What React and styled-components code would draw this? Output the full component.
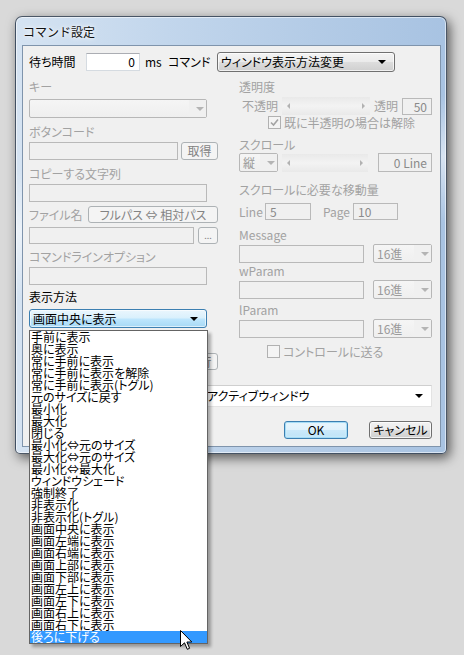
import React from "react";
import styled, { createGlobalStyle, css } from "styled-components";

const GlobalStyle = createGlobalStyle`
  html, body {
    margin: 0;
    padding: 0;
    background: #d9d9d9;
  }
  body {
    font-family: "Noto Sans CJK JP", "Noto Sans", sans-serif;
    font-size: 12px;
    font-feature-settings: "palt";
    color: #000;
  }
`;

const Desktop = styled.div`
  position: relative;
  width: 464px;
  height: 655px;
  overflow: hidden;
  padding: 16px 0 0 15px;
  box-sizing: border-box;
`;

// Aero style window frame
const Window = styled.div`
  width: 432px;
  box-sizing: border-box;
  border: 1px solid rgba(30, 40, 55, 0.75);
  border-radius: 7px 7px 5px 5px;
  padding: 0 5px 6px 6px;
  background:
    linear-gradient(170deg, rgba(255, 255, 255, 0) 30%, rgba(255, 255, 255, 0.55) 42%, rgba(255, 255, 255, 0) 55%),
    linear-gradient(to right, #d5e3f2, #c2d6ec 35%, #b3cbe6 70%, #a8c3e2);
  box-shadow: 3px 4px 12px rgba(0, 0, 0, 0.6), inset 0 0 0 1px rgba(255, 255, 255, 0.55);
`;

const TitleBar = styled.div`
  height: 28px;
  display: flex;
  align-items: center;
  padding-left: 1px;
`;

const Title = styled.span`
  font-size: 12px;
  line-height: 14px;
  color: #111;
  text-shadow: 0 0 6px #fff, 0 0 3px #fff;
  margin-top: 1px;
  font-feature-settings: normal;
`;

const Panel = styled.div`
  border: 1px solid #7f94ac;
  background: #f0f0f0;
  padding: 6px 8px 7px 6px;
`;

const Row = styled.div`
  display: flex;
  align-items: center;
  height: ${(p) => p.$h || 18}px;
  margin-top: ${(p) => p.$mt || 0}px;
  padding-left: ${(p) => p.$pl || 0}px;
  justify-content: ${(p) => (p.$end ? "flex-end" : "flex-start")};
`;

const Columns = styled.div`
  display: grid;
  grid-template-columns: 189px 193px;
  column-gap: 21px;
  margin-top: 8px;
  align-items: start;
`;

const Column = styled.div`
  display: flex;
  flex-direction: column;
`;

const Label = styled.div`
  line-height: 14px;
  height: 14px;
  white-space: nowrap;
  flex: none;
  color: ${(p) => (p.$off ? "#a2a2a2" : "#000")};
  width: ${(p) => (p.$w ? `${p.$w}px` : "auto")};
  margin-top: ${(p) => p.$mt || 0}px;
  margin-left: ${(p) => p.$ml || 0}px;
  padding-left: ${(p) => p.$pl || 0}px;
  box-sizing: border-box;
`;

const TextBox = styled.div`
  flex: none;
  box-sizing: border-box;
  width: ${(p) => p.$w}px;
  height: ${(p) => p.$h || 18}px;
  margin-top: ${(p) => p.$mt || 0}px;
  margin-left: ${(p) => p.$ml || 0}px;
  line-height: ${(p) => (p.$h || 18) - 2}px;
  padding: 0 4px;
  text-align: ${(p) => (p.$right ? "right" : "left")};
  white-space: nowrap;
  ${(p) =>
    p.$off
      ? css`
          background: #f0f0f0;
          border: 1px solid #b9b9b9;
          color: #8a8a8a;
        `
      : css`
          background: #fff;
          border: 1px solid #d5dbe1;
          border-top-color: #abadb3;
          color: #000;
        `}
`;

const comboLook = {
  off: css`
    background: linear-gradient(#f5f5f5, #efefef);
    border: 1px solid #b7b7b7;
    border-radius: 2px;
    color: #9a9a9a;
  `,
  button: css`
    background: linear-gradient(#f3f3f3 0%, #ebebeb 48%, #dddddd 52%, #cfcfcf 100%);
    border: 1px solid #707070;
    border-radius: 3px;
    box-shadow: inset 0 0 0 1px rgba(255, 255, 255, 0.7);
    color: #000;
  `,
  hot: css`
    background: linear-gradient(#eaf6fd 0%, #d9f0fc 48%, #bee6fd 52%, #a7d9f5 100%);
    border: 1px solid #3c7fb1;
    border-radius: 3px;
    box-shadow: inset 0 0 0 1px rgba(255, 255, 255, 0.6);
    color: #000;
  `,
  white: css`
    background: #fff;
    border: 1px solid #e3e3e3;
    border-top-color: #cfcfcf;
    color: #000;
  `,
};

const Combo = styled.div`
  flex: none;
  box-sizing: border-box;
  display: flex;
  align-items: center;
  width: ${(p) => (p.$w ? `${p.$w}px` : "auto")};
  height: ${(p) => p.$h || 19}px;
  margin-top: ${(p) => p.$mt || 0}px;
  margin-left: ${(p) => p.$ml || 0}px;
  padding-left: ${(p) => p.$pad ?? 3}px;
  white-space: nowrap;
  ${(p) => comboLook[p.$look || "off"]}
`;

const ComboAnchor = styled.div`
  position: relative;
  margin-top: 5px;
`;

const ComboText = styled.span`
  flex: 1;
  line-height: 14px;
`;

const Arrow = styled.span`
  flex: none;
  width: 0;
  height: 0;
  margin: 0 ${(p) => p.$mr ?? 8}px 0 4px;
  border-left: 4px solid transparent;
  border-right: 4px solid transparent;
  border-top: 4px solid ${(p) => (p.$off ? "#b4b4b4" : "#000")};
`;

const ArrowZone = styled.span`
  flex: none;
  align-self: stretch;
  width: 17px;
  display: flex;
  align-items: center;
  justify-content: center;
  background: #f0f0f0;
`;

const buttonLook = {
  off: css`
    background: #f4f4f4;
    border: 1px solid #adb2b5;
    color: #838383;
  `,
  normal: css`
    background: linear-gradient(#f2f2f2 0%, #ebebeb 48%, #dddddd 52%, #cfcfcf 100%);
    border: 1px solid #707070;
    color: #000;
    box-shadow: inset 0 0 0 1px rgba(255, 255, 255, 0.75);
  `,
  focus: css`
    background: linear-gradient(#eaf6fd 0%, #e0f2fc 48%, #cbe9fa 52%, #bde3f8 100%);
    border: 1px solid #3c7fb1;
    color: #000;
    box-shadow: inset 0 0 0 1px #a6dcf6, inset 0 0 2px 1px #d9f1fc;
  `,
};

const PushButton = styled.div`
  flex: none;
  box-sizing: border-box;
  width: ${(p) => p.$w}px;
  height: ${(p) => p.$h || 18}px;
  margin-left: ${(p) => p.$ml || 0}px;
  margin-top: ${(p) => p.$mt || 0}px;
  border-radius: 3px;
  display: flex;
  align-items: center;
  justify-content: center;
  white-space: nowrap;
  line-height: 14px;
  font-size: ${(p) => p.$size || 12}px;
  ${(p) => buttonLook[p.$look || "off"]}
`;

const Slider = styled.div`
  flex: none;
  box-sizing: border-box;
  width: ${(p) => p.$w}px;
  height: 18px;
  margin-left: ${(p) => p.$ml || 0}px;
  background: linear-gradient(#e9e9e9, #f3f3f3 50%, #e9e9e9);
  display: flex;
  align-items: center;
  justify-content: space-between;
  padding: 0 5px;
`;

const SliderArrow = styled.span`
  width: 0;
  height: 0;
  border-top: 3px solid transparent;
  border-bottom: 3px solid transparent;
  ${(p) =>
    p.$right
      ? css`border-left: 3px solid #b2b2b2;`
      : css`border-right: 3px solid #b2b2b2;`}
`;

const CheckBox = styled.span`
  flex: none;
  box-sizing: border-box;
  width: 13px;
  height: 13px;
  border: 1px solid #b1b1b1;
  background: #f4f4f4;
  margin-right: 3px;
  display: flex;
  align-items: center;
  justify-content: center;
`;

const DropList = styled.div`
  position: absolute;
  left: 0;
  top: calc(100% + 2px);
  width: 179px;
  box-sizing: border-box;
  background: #fff;
  border: 1px solid #646464;
  box-shadow: 3px 3px 3px rgba(0, 0, 0, 0.3);
  z-index: 5;
`;

const DropItem = styled.div`
  height: 12px;
  line-height: 12px;
  padding-left: 1px;
  white-space: nowrap;
  background: ${(p) => (p.$selected ? "#3399ff" : "transparent")};
  color: ${(p) => (p.$selected ? "#fff" : "#000")};
`;

const Cursor = styled.svg`
  position: absolute;
  left: 180px;
  top: 630px;
  z-index: 10;
`;

const items = [
  "手前に表示",
  "奥に表示",
  "常に手前に表示",
  "常に手前に表示を解除",
  "常に手前に表示(トグル)",
  "元のサイズに戻す",
  "最小化",
  "最大化",
  "閉じる",
  "最小化⇔元のサイズ",
  "最大化⇔元のサイズ",
  "最小化⇔最大化",
  "ウィンドウシェード",
  "強制終了",
  "非表示化",
  "非表示化(トグル)",
  "画面中央に表示",
  "画面左端に表示",
  "画面右端に表示",
  "画面上部に表示",
  "画面下部に表示",
  "画面左上に表示",
  "画面左下に表示",
  "画面右上に表示",
  "画面右下に表示",
  "後ろに下げる",
];

const Check = () => (
  <svg width="9" height="9" viewBox="0 0 9 9">
    <path d="M1 4.5 L3.5 7 L8 1.5" fill="none" stroke="#a3a3a3" strokeWidth="1.6" />
  </svg>
);

const OffCombo = ({ w, text, ml }) => (
  <Combo $w={w} $ml={ml} $pad={text ? 3 : 0}>
    <ComboText>{text}</ComboText>
    <ArrowZone>
      <Arrow $off $mr={0} />
    </ArrowZone>
  </Combo>
);

const App = () => {
  return (
    <Desktop>
      <GlobalStyle />
      <Window>
        <TitleBar>
          <Title>コマンド設定</Title>
        </TitleBar>
        <Panel>
          <Row $h={20}>
            <Label $w={57}>待ち時間</Label>
            <TextBox $w={54} $right>0</TextBox>
            <Label $w={28} $pl={5}>ms</Label>
            <Label $w={49}>コマンド</Label>
            <Combo $w={178} $h={20} $look="button">
              <ComboText>ウィンドウ表示方法変更</ComboText>
              <Arrow />
            </Combo>
          </Row>

          <Columns>
            <Column>
              <Label $off>キー</Label>
              <Combo $w={178} $mt={5} $pad={0}>
                <ComboText />
                <ArrowZone>
                  <Arrow $off $mr={0} />
                </ArrowZone>
              </Combo>
              <Label $off $mt={7}>ボタンコード</Label>
              <Row $mt={3}>
                <TextBox $off $w={149} />
                <PushButton $w={37} $ml={3}>取得</PushButton>
              </Row>
              <Label $off $mt={7}>コピーする文字列</Label>
              <TextBox $off $w={178} $mt={3} />
              <Row $mt={4} $h={17}>
                <Label $off $w={59}>ファイル名</Label>
                <PushButton $w={130} $h={17}>フルパス ⇔ 相対パス</PushButton>
              </Row>
              <Row $mt={4} $h={17}>
                <TextBox $off $w={165} $h={17} />
                <PushButton $w={20} $h={17} $ml={4} $size={9}>...</PushButton>
              </Row>
              <Label $off $mt={6}>コマンドラインオプション</Label>
              <TextBox $off $w={178} $mt={3} />
              <Label $mt={5}>表示方法</Label>
              <ComboAnchor>
                <Combo $w={178} $look="hot">
                  <ComboText>画面中央に表示</ComboText>
                  <Arrow />
                </Combo>
                <DropList>
                  {items.map((it, i) => (
                    <DropItem key={it} $selected={i === items.length - 1}>
                      {it}
                    </DropItem>
                  ))}
                </DropList>
              </ComboAnchor>
              <Row $mt={25} $h={17} $end>
                <PushButton $w={37} $h={17}>実行</PushButton>
              </Row>
            </Column>

            <Column>
              <Label $off>透明度</Label>
              <Row $mt={3}>
                <Label $off $w={43} $pl={3}>不透明</Label>
                <Slider $w={88}>
                  <SliderArrow />
                  <SliderArrow $right />
                </Slider>
                <Label $off $w={28} $ml={4}>透明</Label>
                <TextBox $off $w={30} $h={17} $right>50</TextBox>
              </Row>
              <Row $mt={1} $h={13} $pl={29}>
                <CheckBox>
                  <Check />
                </CheckBox>
                <Label $off>既に半透明の場合は解除</Label>
              </Row>
              <Label $off $mt={9}>スクロール</Label>
              <Row $mt={1} $h={19}>
                <OffCombo w={39} text="縦" />
                <Slider $w={86} $ml={4}>
                  <SliderArrow />
                  <SliderArrow $right />
                </Slider>
                <TextBox $off $w={54} $h={19} $ml={10} $right>0 Line</TextBox>
              </Row>
              <Label $off $mt={11}>スクロールに必要な移動量</Label>
              <Row $mt={6} $h={17}>
                <Label $off $w={26}>Line</Label>
                <TextBox $off $w={46} $h={17}>5</TextBox>
                <Label $off $w={30} $ml={12}>Page</Label>
                <TextBox $off $w={45} $h={17}>10</TextBox>
              </Row>
              <Label $off $mt={8}>Message</Label>
              <Row $mt={2} $h={19}>
                <TextBox $off $w={125} />
                <OffCombo w={59} ml={9} text="16進" />
              </Row>
              <Label $off $mt={1}>wParam</Label>
              <Row $mt={2} $h={19}>
                <TextBox $off $w={125} />
                <OffCombo w={59} ml={9} text="16進" />
              </Row>
              <Label $off $mt={4}>lParam</Label>
              <Row $mt={2} $h={19}>
                <TextBox $off $w={125} />
                <OffCombo w={59} ml={9} text="16進" />
              </Row>
              <Row $mt={7} $h={13} $pl={28}>
                <CheckBox />
                <Label $off>コントロールに送る</Label>
              </Row>
            </Column>
          </Columns>

          <Row $mt={15} $h={22}>
            <Label $w={174}>対象ウィンドウ</Label>
            <Combo $w={229} $h={22} $look="white">
              <ComboText>アクティブウィンドウ</ComboText>
              <Arrow />
            </Combo>
          </Row>

          <Row $mt={14} $end>
            <PushButton $w={64} $look="focus">OK</PushButton>
            <PushButton $w={63} $ml={21} $look="normal">キャンセル</PushButton>
          </Row>
        </Panel>
      </Window>

      <Cursor width="13" height="21" viewBox="0 0 13 21">
        <path
          d="M0.5 0.5 L0.5 16.5 L4.5 12.8 L7.3 19.3 L9.6 18.3 L6.9 12 L11.8 12 Z"
          fill="#fff"
          stroke="#000"
          strokeWidth="1"
          strokeLinejoin="round"
        />
      </Cursor>
    </Desktop>
  );
};

export default App;
